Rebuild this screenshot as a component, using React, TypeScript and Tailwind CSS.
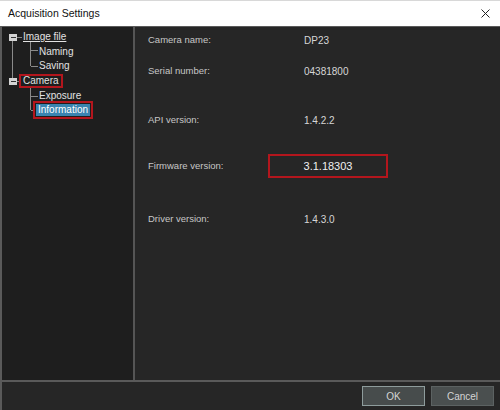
import React from "react";

const font = { fontFamily: '"Liberation Sans", Arial, sans-serif' };

function Tree() {
  return (
    <div className="relative w-[133px] shrink-0 bg-[#1e1e1e] border-r-2 border-[#555555] pt-[3px] text-[10px] text-[#e2e2e2]">
      <svg className="absolute left-0 top-0" width="131" height="120" viewBox="0 0 131 120">
        <g stroke="#8a8a8a" strokeWidth="1" fill="none" shapeRendering="crispEdges">
          <line x1="10.5" y1="13" x2="10.5" y2="51" />
          <line x1="15" y1="10.5" x2="20" y2="10.5" />
          <line x1="15" y1="54.5" x2="18" y2="54.5" />
          <line x1="28.5" y1="15" x2="28.5" y2="39" />
          <line x1="28.5" y1="23.5" x2="36" y2="23.5" />
          <line x1="28.5" y1="39.5" x2="36" y2="39.5" />
          <line x1="28.5" y1="60" x2="28.5" y2="83" />
          <line x1="28.5" y1="69.5" x2="36" y2="69.5" />
          <line x1="28.5" y1="83.5" x2="32" y2="83.5" />
        </g>
        <rect x="7" y="7" width="8" height="7" fill="#d4d4d4" />
        <line x1="8.5" y1="10.5" x2="13.5" y2="10.5" stroke="#333" strokeWidth="1" shapeRendering="crispEdges" />
        <rect x="7" y="51" width="8" height="7" fill="#d4d4d4" />
        <line x1="8.5" y1="54.5" x2="13.5" y2="54.5" stroke="#333" strokeWidth="1" shapeRendering="crispEdges" />
      </svg>
      <div className="relative flex flex-col">
        <div className="flex h-[14.6px] items-center pl-[21px]">
          <span className="underline leading-[10px]">Image file</span>
        </div>
        <div className="flex h-[14.6px] items-center pl-[37px]">
          <span className="leading-[10px]">Naming</span>
        </div>
        <div className="flex h-[14.6px] items-center pl-[37px]">
          <span className="leading-[10px]">Saving</span>
        </div>
        <div className="flex h-[14.6px] items-center pl-[17px]">
          <span className="border-2 border-[#b3161d] px-[2px] leading-[10px]">Camera</span>
        </div>
        <div className="flex h-[14.6px] items-center pl-[37px]">
          <span className="leading-[10px]">Exposure</span>
        </div>
        <div className="flex h-[14.6px] items-center pl-[31px]">
          <span className="border-2 border-[#b3161d] p-[1px]">
            <span className="block bg-[#3a84b0] px-[2px] py-[1px] leading-[10px] text-white">Information</span>
          </span>
        </div>
      </div>
    </div>
  );
}

function Row({ label, value, mt }: { label: string; value: string; mt: string }) {
  return (
    <div className={`flex h-[16px] items-center ${mt}`}>
      <span className="w-[156px] text-[9.5px] text-[#c6c6c6]">{label}</span>
      <span className="text-[10px] text-[#d6d6d6]">{value}</span>
    </div>
  );
}

export default function App() {
  return (
    <div className="flex h-[410px] w-[500px] flex-col overflow-hidden" style={font}>
      <div className="flex h-[26px] shrink-0 items-center justify-between border-t border-[#d8d8d8] bg-white pl-[8px] pr-[10px]">
        <span className="text-[10.5px] text-[#111111]">Acquisition Settings</span>
        <svg width="9" height="9" viewBox="0 0 9 9">
          <path d="M0.5 0.5 L8.5 8.5 M8.5 0.5 L0.5 8.5" stroke="#222" strokeWidth="1" />
        </svg>
      </div>
      <div className="flex flex-1 flex-col border-l-2 border-t border-[#5a5a5a] bg-[#262626]">
        <div className="flex flex-1">
          <Tree />
          <div className="flex flex-1 flex-col bg-[#262626] pl-[13px] pt-[5px]">
            <Row label="Camera name:" value="DP23" mt="mt-0" />
            <Row label="Serial number:" value="04381800" mt="mt-[15px]" />
            <Row label="API version:" value="1.4.2.2" mt="mt-[33px]" />
            <div className="mt-[26px] flex h-[24px] items-center">
              <span className="w-[120px] text-[9.5px] text-[#c6c6c6]">Firmware version:</span>
              <span className="flex h-[24px] w-[120px] items-center justify-center border-2 border-[#b3161d] text-[11px] text-[#f0f0f0]">
                3.1.18303
              </span>
            </div>
            <Row label="Driver version:" value="1.4.3.0" mt="mt-[33px]" />
          </div>
        </div>
        <div className="flex h-[30px] shrink-0 items-center justify-end gap-[6px] border-t-2 border-[#5a5a5a] bg-[#262626] pr-[6px]">
          <button className="flex h-[20px] w-[63px] items-center justify-center border border-[#8e9c9c] bg-[#474c4c] text-[10px] text-[#d4d4d4]">
            OK
          </button>
          <button className="flex h-[20px] w-[63px] items-center justify-center border border-[#5c6262] bg-[#4a4f4f] text-[10px] text-[#d4d4d4]">
            Cancel
          </button>
        </div>
      </div>
    </div>
  );
}
